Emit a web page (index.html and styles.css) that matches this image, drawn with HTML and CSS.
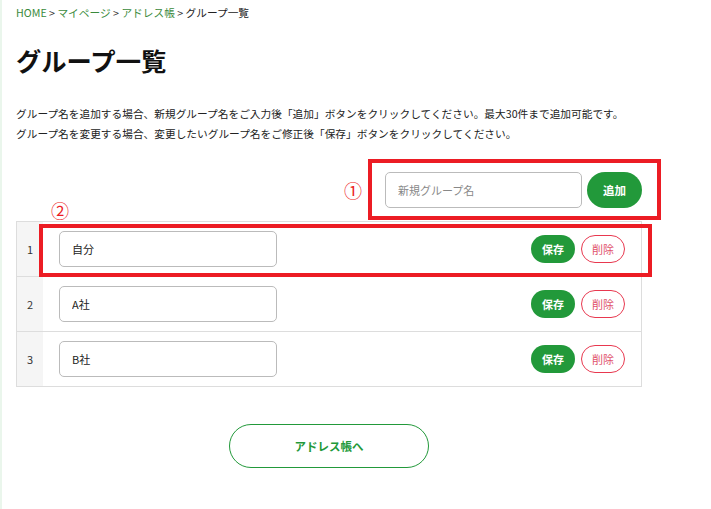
FILE: index.html
```html
<!DOCTYPE html>
<html lang="ja">
<head>
  <meta charset="UTF-8">
  <title>グループ一覧</title>
  <meta name="viewport" content="width=device-width, initial-scale=1.0">
  <link rel="stylesheet" href="styles.css">
</head>
<body>

<div class="page">

  <!-- Breadcrumb -->
  <nav class="breadcrumb">
    <a href="#">HOME</a> &gt; <a href="#">マイページ</a> &gt; <a href="#">アドレス帳</a> &gt; <span>グループ一覧</span>
  </nav>

  <h1 class="page-title">グループ一覧</h1>

  <div class="lead">
    <p>グループ名を追加する場合、新規グループ名をご入力後「追加」ボタンをクリックしてください。最大30件まで追加可能です。</p>
    <p>グループ名を変更する場合、変更したいグループ名をご修正後「保存」ボタンをクリックしてください。</p>
  </div>

  <!-- New group -->
  <div class="add-row">
    <input type="text" class="text-input add-input" placeholder="新規グループ名">
    <button class="btn btn-add">追加</button>
  </div>

  <!-- Group list -->
  <div class="group-table">
    <div class="group-row">
      <div class="group-no">1</div>
      <div class="group-name"><input type="text" class="text-input" value="自分"></div>
      <div class="group-actions">
        <button class="btn btn-save">保存</button>
        <button class="btn btn-delete">削除</button>
      </div>
    </div>
    <div class="group-row">
      <div class="group-no">2</div>
      <div class="group-name"><input type="text" class="text-input" value="A社"></div>
      <div class="group-actions">
        <button class="btn btn-save">保存</button>
        <button class="btn btn-delete">削除</button>
      </div>
    </div>
    <div class="group-row">
      <div class="group-no">3</div>
      <div class="group-name"><input type="text" class="text-input" value="B社"></div>
      <div class="group-actions">
        <button class="btn btn-save">保存</button>
        <button class="btn btn-delete">削除</button>
      </div>
    </div>
  </div>

  <div class="back">
    <a href="#" class="btn-back">アドレス帳へ</a>
  </div>

  <!-- Annotations -->
  <div class="mark mark-box-1"></div>
  <div class="mark mark-box-2"></div>
  <span class="mark-no mark-no-1">①</span>
  <span class="mark-no mark-no-2">②</span>

</div>

</body>
</html>
```

FILE: styles.css
```css
body {
  margin: 0;
  font-family: "Noto Sans CJK JP", "Noto Sans", sans-serif;
  color: #222;
  background-color: #fff;
}

.page {
  position: relative;
  width: 626px;
  min-height: 509px;
  padding: 5px 14px 0 14px;
  border-left: 2px solid #eaf6ec;
  box-sizing: content-box;
}

.breadcrumb {
  font-size: 10.7px;
  line-height: 16px;
  color: #333;
}

.breadcrumb a {
  color: #3a8a3c;
  text-decoration: none;
}

.breadcrumb span {
  color: #222;
}

.page-title {
  margin: 24px 0 0 0;
  font-size: 25.3px;
  line-height: 30px;
  font-weight: bold;
  color: #111;
}

.lead {
  margin-top: 29px;
  font-size: 10.7px;
  line-height: 20px;
  color: #222;
}

.lead p {
  margin: 0;
}

.add-row {
  display: flex;
  justify-content: flex-end;
  gap: 5px;
  margin-top: 28px;
}

.text-input {
  box-sizing: border-box;
  height: 36px;
  border: 1px solid #bbb;
  border-radius: 5px;
  padding: 0 12px;
  font-family: inherit;
  font-size: 11px;
  color: #222;
  background: #fff;
  outline: none;
}

.text-input::placeholder {
  color: #888;
}

.add-input {
  width: 197px;
}

.btn {
  font-family: inherit;
  border: none;
  cursor: pointer;
  padding: 0;
}

.btn-add {
  width: 55px;
  height: 36px;
  border-radius: 18px;
  background-color: #22993a;
  color: #fff;
  font-size: 11.5px;
  font-weight: bold;
}

.group-table {
  margin-top: 13px;
  border: 1px solid #ddd;
  border-bottom: none;
}

.group-row {
  display: flex;
  align-items: center;
  height: 54px;
  border-bottom: 1px solid #ddd;
}

.group-no {
  width: 26px;
  align-self: stretch;
  display: flex;
  align-items: center;
  justify-content: center;
  background-color: #f5f5f5;
  font-size: 11px;
  color: #333;
}

.group-name {
  flex: 1;
  padding-left: 16px;
}

.group-name .text-input {
  width: 218px;
}

.group-actions {
  display: flex;
  gap: 6px;
  padding-right: 16px;
}

.btn-save,
.btn-delete {
  box-sizing: border-box;
  width: 44px;
  height: 28px;
  border-radius: 14px;
  font-size: 11px;
}

.btn-save {
  background-color: #22993a;
  color: #fff;
  font-weight: bold;
}

.btn-delete {
  background-color: #fff;
  border: 1px solid #e8384f;
  color: #e0506a;
}

.back {
  display: flex;
  justify-content: center;
  margin-top: 37px;
}

.btn-back {
  box-sizing: border-box;
  display: flex;
  align-items: center;
  justify-content: center;
  width: 200px;
  height: 44px;
  border: 1.5px solid #22993a;
  border-radius: 22px;
  color: #22993a;
  font-size: 11.5px;
  font-weight: bold;
  text-decoration: none;
}

/* annotation overlay */
.mark {
  position: absolute;
  box-sizing: border-box;
  border: 4px solid #ec1c24;
}

.mark-box-1 {
  left: 366px;
  top: 159px;
  width: 293px;
  height: 61px;
}

.mark-box-2 {
  left: 37px;
  top: 224px;
  width: 613px;
  height: 53px;
}

.mark-no {
  position: absolute;
  font-size: 18px;
  line-height: 20px;
  color: #ec1c24;
}

.mark-no-1 {
  left: 342px;
  top: 180px;
}

.mark-no-2 {
  left: 49px;
  top: 200px;
}
```
